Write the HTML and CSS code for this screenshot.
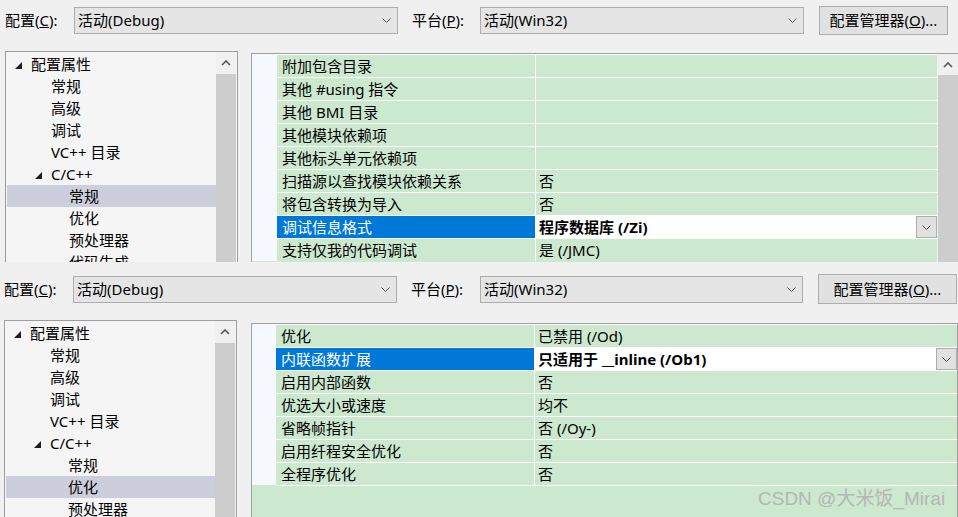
FILE: index.html
```html
<!DOCTYPE html>
<html lang="zh-CN">
<head>
<meta charset="utf-8">
<title>属性页</title>
<link rel="stylesheet" href="styles.css">
</head>
<body>
<section class="pane pane-top">
  <div class="toolbar">
    <span class="lbl">配置(<u>C</u>):</span>
    <div class="combo"><span>活动(Debug)</span><svg width="9" height="5" viewBox="0 0 9 5"><path d="M0.5 0.5L4.5 4.5L8.5 0.5" fill="none" stroke="#555"/></svg></div>
    <span class="lbl lbl-plat">平台(<u>P</u>):</span>
    <div class="combo combo-plat"><span>活动(Win32)</span><svg width="9" height="5" viewBox="0 0 9 5"><path d="M0.5 0.5L4.5 4.5L8.5 0.5" fill="none" stroke="#555"/></svg></div>
    <button class="btn">配置管理器(<u>O</u>)...</button>
  </div>
  <div class="main">
    <div class="tree">
      <ul class="tree-list">
        <li class="ti l0"><svg class="tri" viewBox="0 0 7 7"><path d="M7 0V7H0Z" fill="#1e1e1e"/></svg>配置属性</li>
        <li class="ti l1">常规</li>
        <li class="ti l1">高级</li>
        <li class="ti l1">调试</li>
        <li class="ti l1">VC++ 目录</li>
        <li class="ti l1t"><svg class="tri" viewBox="0 0 7 7"><path d="M7 0V7H0Z" fill="#1e1e1e"/></svg>C/C++</li>
        <li class="ti l2 sel">常规</li>
        <li class="ti l2">优化</li>
        <li class="ti l2">预处理器</li>
        <li class="ti l2">代码生成</li>
      </ul>
      <div class="vscroll">
        <div class="vs-up"><svg width="10" height="6" viewBox="0 0 10 6"><path d="M1 5L5 1L9 5" fill="none" stroke="#555" stroke-width="1.6"/></svg></div>
        <div class="vs-thumb"></div>
      </div>
    </div>
    <div class="grid">
      <div class="rows">
        <div class="row"><div class="gut"></div><div class="name">附加包含目录</div><div class="val"></div></div>
        <div class="row"><div class="gut"></div><div class="name">其他 #using 指令</div><div class="val"></div></div>
        <div class="row"><div class="gut"></div><div class="name">其他 BMI 目录</div><div class="val"></div></div>
        <div class="row"><div class="gut"></div><div class="name">其他模块依赖项</div><div class="val"></div></div>
        <div class="row"><div class="gut"></div><div class="name">其他标头单元依赖项</div><div class="val"></div></div>
        <div class="row"><div class="gut"></div><div class="name">扫描源以查找模块依赖关系</div><div class="val">否</div></div>
        <div class="row"><div class="gut"></div><div class="name">将包含转换为导入</div><div class="val">否</div></div>
        <div class="row sel"><div class="gut"></div><div class="name">调试信息格式</div><div class="val"><span>程序数据库 (/Zi)</span><span class="dd"><svg width="9" height="5" viewBox="0 0 9 5"><path d="M0.5 0.5L4.5 4.5L8.5 0.5" fill="none" stroke="#444"/></svg></span></div></div>
        <div class="row"><div class="gut"></div><div class="name">支持仅我的代码调试</div><div class="val">是 (/JMC)</div></div>
      </div>
      <div class="vscroll vscroll-grid">
        <div class="vs-up"><svg width="10" height="6" viewBox="0 0 10 6"><path d="M1 5L5 1L9 5" fill="none" stroke="#555" stroke-width="1.6"/></svg></div>
        <div class="vs-thumb"></div>
      </div>
    </div>
  </div>
</section>
<section class="pane pane-bottom">
  <div class="toolbar">
    <span class="lbl">配置(<u>C</u>):</span>
    <div class="combo"><span>活动(Debug)</span><svg width="9" height="5" viewBox="0 0 9 5"><path d="M0.5 0.5L4.5 4.5L8.5 0.5" fill="none" stroke="#555"/></svg></div>
    <span class="lbl lbl-plat">平台(<u>P</u>):</span>
    <div class="combo combo-plat"><span>活动(Win32)</span><svg width="9" height="5" viewBox="0 0 9 5"><path d="M0.5 0.5L4.5 4.5L8.5 0.5" fill="none" stroke="#555"/></svg></div>
    <button class="btn">配置管理器(<u>O</u>)...</button>
  </div>
  <div class="main">
    <div class="tree">
      <ul class="tree-list">
        <li class="ti l0"><svg class="tri" viewBox="0 0 7 7"><path d="M7 0V7H0Z" fill="#1e1e1e"/></svg>配置属性</li>
        <li class="ti l1">常规</li>
        <li class="ti l1">高级</li>
        <li class="ti l1">调试</li>
        <li class="ti l1">VC++ 目录</li>
        <li class="ti l1t"><svg class="tri" viewBox="0 0 7 7"><path d="M7 0V7H0Z" fill="#1e1e1e"/></svg>C/C++</li>
        <li class="ti l2">常规</li>
        <li class="ti l2 sel">优化</li>
        <li class="ti l2">预处理器</li>
        <li class="ti l2">代码生成</li>
      </ul>
      <div class="vscroll">
        <div class="vs-up"><svg width="10" height="6" viewBox="0 0 10 6"><path d="M1 5L5 1L9 5" fill="none" stroke="#555" stroke-width="1.6"/></svg></div>
        <div class="vs-thumb"></div>
      </div>
    </div>
    <div class="grid">
      <div class="rows">
        <div class="row"><div class="gut"></div><div class="name">优化</div><div class="val">已禁用 (/Od)</div></div>
        <div class="row sel"><div class="gut"></div><div class="name">内联函数扩展</div><div class="val"><span>只适用于 __inline (/Ob1)</span><span class="dd"><svg width="9" height="5" viewBox="0 0 9 5"><path d="M0.5 0.5L4.5 4.5L8.5 0.5" fill="none" stroke="#444"/></svg></span></div></div>
        <div class="row"><div class="gut"></div><div class="name">启用内部函数</div><div class="val">否</div></div>
        <div class="row"><div class="gut"></div><div class="name">优选大小或速度</div><div class="val">均不</div></div>
        <div class="row"><div class="gut"></div><div class="name">省略帧指针</div><div class="val">否 (/Oy-)</div></div>
        <div class="row"><div class="gut"></div><div class="name">启用纤程安全优化</div><div class="val">否</div></div>
        <div class="row"><div class="gut"></div><div class="name">全程序优化</div><div class="val">否</div></div>
        <div class="endline"></div>
      </div>
    </div>
  </div>
  <div class="wm">CSDN @大米饭_Mirai</div>
</section>
</body>
</html>
```

FILE: styles.css
```css
html, body {
  margin: 0;
  padding: 0;
}
body {
  width: 958px;
  height: 517px;
  overflow: hidden;
  background: #f0f0f0;
  font-family: "Noto Sans", "Noto Sans CJK SC", sans-serif;
  font-size: 15px;
  line-height: 22px;
  color: #000;
}

.pane {
  position: relative;
  overflow: hidden;
  display: flex;
  flex-direction: column;
}
.pane-top { height: 262px; }
.pane-bottom { height: 255px; }

/* toolbar */
.toolbar {
  display: flex;
  align-items: flex-start;
  flex: none;
  height: 51px;
  padding-left: 5px;
  box-sizing: border-box;
}
.pane-bottom .toolbar {
  height: 58px;
  padding-top: 7px;
  padding-left: 4px;
}
.lbl {
  width: 69px;
  margin-top: 7px;
  line-height: 27px;
  white-space: nowrap;
  flex: none;
}
.lbl-plat {
  margin-left: 14px;
  width: 68px;
}
.pane-bottom .lbl-plat { width: 69px; }
.combo {
  width: 324px;
  height: 27px;
  box-sizing: border-box;
  margin-top: 7px;
  border: 1px solid #adadad;
  background: #e5e5e5;
  display: flex;
  align-items: center;
  justify-content: space-between;
  padding: 0 6px 0 3px;
  flex: none;
  line-height: 25px;
}
.pane-bottom .combo-plat { width: 323px; }
.btn {
  margin-left: 15px;
  margin-top: 6px;
  width: 129px;
  height: 29px;
  box-sizing: border-box;
  border: 1px solid #adadad;
  background: #e1e1e1;
  font: inherit;
  line-height: 27px;
  padding: 0;
  color: #000;
  flex: none;
}
.pane-bottom .btn {
  width: 139px;
  height: 30px;
  margin-top: 5px;
}

/* main area */
.main {
  display: flex;
  align-items: flex-start;
  flex: 1;
  min-height: 0;
}

/* tree */
.tree {
  margin-left: 5px;
  width: 233px;
  height: 300px;
  box-sizing: border-box;
  border: 1px solid #9d9d9d;
  background: #f5f5f5;
  display: flex;
  flex: none;
}
.pane-bottom .tree { margin-left: 4px; }
.tree-list {
  list-style: none;
  margin: 0;
  padding: 1px 0 0 1px;
  width: 210px;
  box-sizing: border-box;
  flex: none;
}
.ti {
  height: 22px;
  display: flex;
  align-items: center;
  white-space: nowrap;
}
.ti.sel { background: #cccedb; }
.l0 { padding-left: 8px; }
.l1 { padding-left: 44px; }
.l1t { padding-left: 28px; }
.l2 { padding-left: 62px; }
.tri {
  width: 7px;
  height: 7px;
  margin-right: 9px;
  margin-top: 2px;
  flex: none;
}

.vscroll {
  width: 20px;
  margin-right: 1px;
  display: flex;
  flex-direction: column;
  flex: none;
  align-self: stretch;
}
.vs-up {
  height: 22px;
  display: flex;
  align-items: center;
  justify-content: center;
  background: #f0f0f0;
  flex: none;
}
.vs-thumb {
  flex: 1;
  background: #cdcdcd;
}

/* property grid */
.grid {
  flex: 1;
  margin-left: 13px;
  margin-top: 2px;
  height: 300px;
  border-left: 1px solid #a0a0a0;
  border-top: 1px solid #a0a0a0;
  background: #cce8cf;
  display: flex;
  align-items: stretch;
}
.pane-bottom .grid {
  margin-left: 14px;
  margin-top: 3px;
  border-right: 1px solid #a0a0a0;
}
.rows {
  flex: 1;
  min-width: 0;
}
.row {
  display: flex;
  height: 23px;
}
.gut {
  width: 25px;
  background: #f5f8fd;
  flex: none;
}
.pane-bottom .gut { width: 24px; }
.name {
  width: 258px;
  box-sizing: border-box;
  border-top: 1px solid #fff;
  padding-left: 5px;
  line-height: 22px;
  white-space: nowrap;
  overflow: hidden;
  flex: none;
}
.val {
  flex: 1;
  min-width: 0;
  border-top: 1px solid #fff;
  border-left: 1px solid #fff;
  padding-left: 3px;
  line-height: 22px;
  display: flex;
  white-space: nowrap;
}
.row.sel .name {
  background: #0078d7;
  color: #fff;
}
.row.sel .val {
  background: #fff;
  font-weight: 700;
}
.dd {
  margin-left: auto;
  width: 21px;
  height: 22px;
  box-sizing: border-box;
  border: 1px solid #adadad;
  background: #e1e1e1;
  display: flex;
  align-items: center;
  justify-content: center;
  flex: none;
}
.endline {
  height: 1px;
  margin-left: 24px;
  background: #fff;
}
.vscroll-grid {
  width: 20px;
  margin-right: 0;
  border-left: 1px solid #eef3ef;
  margin-top: 0;
}
.vscroll-grid .vs-up { height: 21px; }

/* watermark overlay */
.wm {
  position: absolute;
  left: 758px;
  top: 227px;
  font-family: "Liberation Sans", "Noto Sans CJK SC", sans-serif;
  font-size: 19px;
  line-height: 20px;
  color: #b2b8b3;
  white-space: nowrap;
}
```
